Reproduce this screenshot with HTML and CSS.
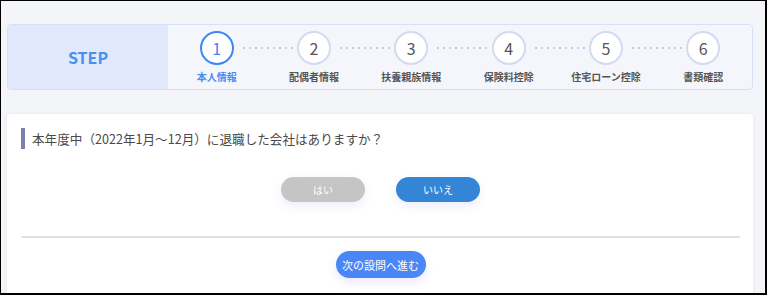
FILE: index.html
```html
<!DOCTYPE html>
<html lang="ja">
<head>
    <meta charset="UTF-8">
    <meta name="viewport" content="width=device-width, initial-scale=1.0">
    <title>年末調整 STEP</title>
    <link rel="stylesheet" href="styles.css">
</head>
<body>
    <div class="frame">
        <div class="step-box">
            <div class="step-title">STEP</div>
            <ol class="steps">
                <li class="step active"><span class="num">1</span><span class="label">本人情報</span></li>
                <li class="step"><span class="num">2</span><span class="label">配偶者情報</span></li>
                <li class="step"><span class="num">3</span><span class="label">扶養親族情報</span></li>
                <li class="step"><span class="num">4</span><span class="label">保険料控除</span></li>
                <li class="step"><span class="num">5</span><span class="label">住宅ローン控除</span></li>
                <li class="step"><span class="num">6</span><span class="label">書類確認</span></li>
            </ol>
        </div>

        <div class="card">
            <h2 class="question">本年度中（2022年1月～12月）に退職した会社はありますか？</h2>
            <div class="answers">
                <button class="btn btn-yes">はい</button>
                <button class="btn btn-no">いいえ</button>
            </div>
            <hr class="divider">
            <div class="next-row">
                <button class="btn btn-next">次の設問へ進む</button>
            </div>
        </div>
    </div>
</body>
</html>
```

FILE: styles.css
```css
* {
    box-sizing: border-box;
}
body {
    margin: 0;
    font-family: "Noto Sans CJK JP", "Noto Sans", sans-serif;
    color: #444;
}
.frame {
    width: 767px;
    height: 295px;
    overflow: hidden;
    background-color: #f4f5f9;
    border-style: solid;
    border-color: #000;
    border-width: 1px 2px 2px 1px;
    padding: 23px 12px 0 6px;
}
.step-box {
    display: flex;
    height: 66px;
    border: 1px solid #d6e0f8;
    border-radius: 4px;
    background-color: #f4f6fb;
    overflow: hidden;
}
.step-title {
    width: 160px;
    display: flex;
    align-items: center;
    justify-content: center;
    background-color: #e3e9fc;
    color: #4590f0;
    font-size: 16px;
    font-weight: bold;
}
.steps {
    flex: 1;
    display: flex;
    list-style: none;
    margin: 0;
    padding: 0;
}
.step {
    flex: 1;
    position: relative;
    display: flex;
    flex-direction: column;
    align-items: center;
    padding-top: 6px;
}
.step + .step::before {
    content: "";
    position: absolute;
    top: 22px;
    left: calc(-50% + 24px);
    right: calc(50% + 21px);
    height: 2px;
    background-image: radial-gradient(circle, #c4cadf 0.9px, transparent 1.3px);
    background-size: 6px 2px;
    background-repeat: repeat-x;
}
.num {
    width: 34px;
    height: 34px;
    border: 2px solid #d4daef;
    border-radius: 50%;
    background-color: #fff;
    display: flex;
    align-items: center;
    justify-content: center;
    font-size: 16px;
    color: #555;
}
.label {
    margin-top: 5px;
    font-size: 10px;
    line-height: 14px;
    font-weight: bold;
    color: #555;
}
.step.active .num {
    border-color: #3d86f6;
    color: #3d86f6;
}
.step.active .label {
    color: #4b8cef;
}
.card {
    margin-top: 24px;
    height: 200px;
    background-color: #fff;
    border-radius: 4px;
    box-shadow: 0 0 4px rgba(0, 0, 0, 0.06);
    padding: 14px 13px 0 14px;
}
.question {
    margin: 0;
    height: 21px;
    display: flex;
    align-items: center;
    border-left: 4px solid #7b80ae;
    padding-left: 7px;
    font-size: 12.6px;
    font-weight: normal;
    color: #4a4a4a;
}
.answers {
    display: flex;
    justify-content: center;
    gap: 31px;
    margin-top: 28px;
}
.btn {
    border: none;
    color: #fff;
    font-family: "Noto Sans CJK JP", "Noto Sans", sans-serif;
    cursor: pointer;
    padding: 0;
}
.btn-yes,
.btn-no {
    width: 84px;
    height: 25px;
    border-radius: 13px;
    font-size: 10px;
    box-shadow: 0 4px 10px rgba(110, 100, 240, 0.12);
}
.btn-yes {
    background-color: #c5c5c5;
}
.btn-no {
    background-color: #3585d7;
}
.divider {
    margin: 34px 0 0;
    border: none;
    height: 2px;
    background-color: #e1e1e1;
}
.next-row {
    display: flex;
    justify-content: center;
    margin-top: 13px;
}
.btn-next {
    width: 90px;
    height: 27px;
    border-radius: 14px;
    background-color: #4b86f6;
    font-size: 11px;
    box-shadow: 0 4px 10px rgba(110, 100, 240, 0.15);
}
```
